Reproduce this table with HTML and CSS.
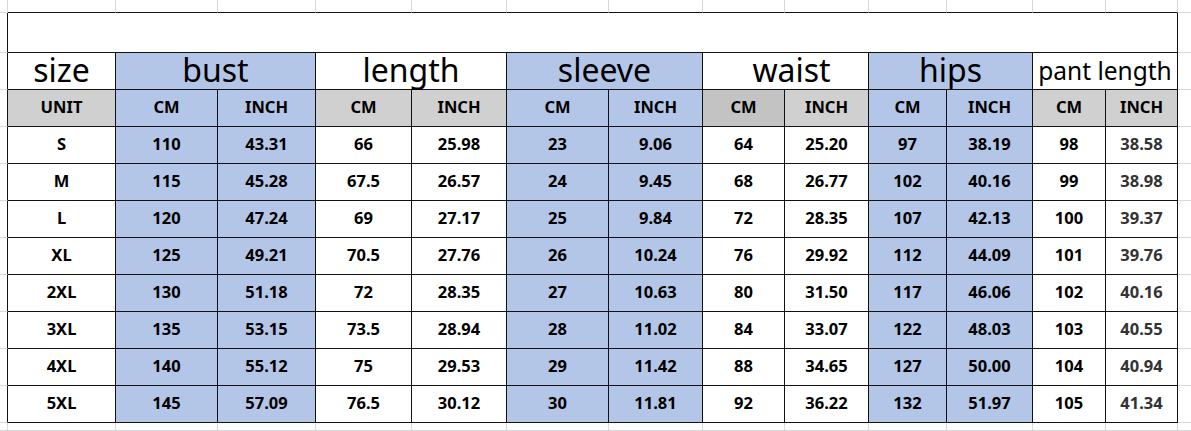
FILE: index.html
```html
<!DOCTYPE html>
<html>
<head>
<meta charset="utf-8">
<link rel="stylesheet" href="styles.css">
</head>
<body>
<div class="sheet">
  <!-- row 0 -->
  <div class="c"></div>
  <div class="c et"></div><div class="c et"></div><div class="c et"></div><div class="c et"></div><div class="c et"></div><div class="c et"></div><div class="c et"></div><div class="c et"></div><div class="c et"></div><div class="c et"></div><div class="c et"></div><div class="c et"></div><div class="c et"></div>
  <div class="c last"></div>
  <!-- row 1 -->
  <div class="c el"></div>
  <div class="c t title"></div>
  <div class="c last"></div>
  <!-- row 2 -->
  <div class="c el"></div>
  <div class="c t hd">size</div>
  <div class="c t hd blue span2">bust</div>
  <div class="c t hd span2">length</div>
  <div class="c t hd blue span2">sleeve</div>
  <div class="c t hd span2 shift">waist</div>
  <div class="c t hd blue span2">hips</div>
  <div class="c t hd small span2">pant length</div>
  <div class="c last"></div>
  <!-- row 3 -->
  <div class="c el"></div>
  <div class="c t d grey">UNIT</div>
  <div class="c t d blue">CM</div><div class="c t d blue">INCH</div>
  <div class="c t d grey">CM</div><div class="c t d grey">INCH</div>
  <div class="c t d blue">CM</div><div class="c t d blue">INCH</div>
  <div class="c t d grey2">CM</div><div class="c t d grey">INCH</div>
  <div class="c t d blue">CM</div><div class="c t d blue">INCH</div>
  <div class="c t d grey">CM</div><div class="c t d grey">INCH</div>
  <div class="c last"></div>
  <!-- S -->
  <div class="c el"></div>
  <div class="c t d">S</div>
  <div class="c t d blue">110</div><div class="c t d blue">43.31</div>
  <div class="c t d">66</div><div class="c t d">25.98</div>
  <div class="c t d blue">23</div><div class="c t d blue">9.06</div>
  <div class="c t d">64</div><div class="c t d">25.20</div>
  <div class="c t d blue">97</div><div class="c t d blue">38.19</div>
  <div class="c t d">98</div><div class="c t d soft">38.58</div>
  <div class="c last"></div>
  <!-- M -->
  <div class="c el"></div>
  <div class="c t d">M</div>
  <div class="c t d blue">115</div><div class="c t d blue">45.28</div>
  <div class="c t d">67.5</div><div class="c t d">26.57</div>
  <div class="c t d blue">24</div><div class="c t d blue">9.45</div>
  <div class="c t d">68</div><div class="c t d">26.77</div>
  <div class="c t d blue">102</div><div class="c t d blue">40.16</div>
  <div class="c t d">99</div><div class="c t d soft">38.98</div>
  <div class="c last"></div>
  <!-- L -->
  <div class="c el"></div>
  <div class="c t d">L</div>
  <div class="c t d blue">120</div><div class="c t d blue">47.24</div>
  <div class="c t d">69</div><div class="c t d">27.17</div>
  <div class="c t d blue">25</div><div class="c t d blue">9.84</div>
  <div class="c t d">72</div><div class="c t d">28.35</div>
  <div class="c t d blue">107</div><div class="c t d blue">42.13</div>
  <div class="c t d">100</div><div class="c t d soft">39.37</div>
  <div class="c last"></div>
  <!-- XL -->
  <div class="c el"></div>
  <div class="c t d">XL</div>
  <div class="c t d blue">125</div><div class="c t d blue">49.21</div>
  <div class="c t d">70.5</div><div class="c t d">27.76</div>
  <div class="c t d blue">26</div><div class="c t d blue">10.24</div>
  <div class="c t d">76</div><div class="c t d">29.92</div>
  <div class="c t d blue">112</div><div class="c t d blue">44.09</div>
  <div class="c t d">101</div><div class="c t d soft">39.76</div>
  <div class="c last"></div>
  <!-- 2XL -->
  <div class="c el"></div>
  <div class="c t d">2XL</div>
  <div class="c t d blue">130</div><div class="c t d blue">51.18</div>
  <div class="c t d">72</div><div class="c t d">28.35</div>
  <div class="c t d blue">27</div><div class="c t d blue">10.63</div>
  <div class="c t d">80</div><div class="c t d">31.50</div>
  <div class="c t d blue">117</div><div class="c t d blue">46.06</div>
  <div class="c t d">102</div><div class="c t d soft">40.16</div>
  <div class="c last"></div>
  <!-- 3XL -->
  <div class="c el"></div>
  <div class="c t d">3XL</div>
  <div class="c t d blue">135</div><div class="c t d blue">53.15</div>
  <div class="c t d">73.5</div><div class="c t d">28.94</div>
  <div class="c t d blue">28</div><div class="c t d blue">11.02</div>
  <div class="c t d">84</div><div class="c t d">33.07</div>
  <div class="c t d blue">122</div><div class="c t d blue">48.03</div>
  <div class="c t d">103</div><div class="c t d soft">40.55</div>
  <div class="c last"></div>
  <!-- 4XL -->
  <div class="c el"></div>
  <div class="c t d">4XL</div>
  <div class="c t d blue">140</div><div class="c t d blue">55.12</div>
  <div class="c t d">75</div><div class="c t d">29.53</div>
  <div class="c t d blue">29</div><div class="c t d blue">11.42</div>
  <div class="c t d">88</div><div class="c t d">34.65</div>
  <div class="c t d blue">127</div><div class="c t d blue">50.00</div>
  <div class="c t d">104</div><div class="c t d soft">40.94</div>
  <div class="c last"></div>
  <!-- 5XL -->
  <div class="c el"></div>
  <div class="c t d">5XL</div>
  <div class="c t d blue">145</div><div class="c t d blue">57.09</div>
  <div class="c t d">76.5</div><div class="c t d">30.12</div>
  <div class="c t d blue">30</div><div class="c t d blue">11.81</div>
  <div class="c t d">92</div><div class="c t d">36.22</div>
  <div class="c t d blue">132</div><div class="c t d blue">51.97</div>
  <div class="c t d">105</div><div class="c t d soft">41.34</div>
  <div class="c last"></div>
  <!-- row 12 -->
  <div class="c"></div>
  <div class="c"></div><div class="c"></div><div class="c"></div><div class="c"></div><div class="c"></div><div class="c"></div><div class="c"></div><div class="c"></div><div class="c"></div><div class="c"></div><div class="c"></div><div class="c"></div><div class="c"></div>
  <div class="c last"></div>
</div>
</body>
</html>
```
FILE: styles.css
```css
html, body {
  margin: 0;
  padding: 0;
  background: #ffffff;
}

body {
  font-family: "Noto Sans", "Open Sans", sans-serif;
  color: #000;
  width: 1191px;
  height: 431px;
  overflow: hidden;
}

.sheet {
  display: grid;
  grid-template-columns: 8px 108px 102px 98px 96px 95px 102px 94px 82px 84px 78px 86px 73px 72px 13px;
  grid-template-rows: 13px 40px 37px 37px 37px 37px 37px 37px 37px 37px 37px 37px 8px;
  width: 1191px;
}

.c {
  box-sizing: border-box;
  border-right: 1px solid #d8d8d8;
  border-bottom: 1px solid #d8d8d8;
  display: flex;
  align-items: center;
  justify-content: center;
  background: #ffffff;
  min-width: 0;
}

.last {
  border-right: none;
}

.et {
  border-bottom-color: #111;
}

.el {
  border-right-color: #111;
}

.t {
  border-right-color: #111;
  border-bottom-color: #111;
}

.title {
  grid-column: span 13;
}

.span2 {
  grid-column: span 2;
}

.hd {
  font-size: 32px;
  font-weight: 400;
  line-height: 1;
  padding-bottom: 3px;
  white-space: nowrap;
}

.hd.shift {
  padding-left: 12px;
}

.hd.small {
  font-size: 24.5px;
  padding-bottom: 0;
}

.d {
  font-size: 16.5px;
  font-weight: 700;
  line-height: 1;
  padding-bottom: 1px;
}

.blue {
  background: #b4c6e7;
}

.grey {
  background: #d0d0d0;
}

.grey2 {
  background: #c3c3c3;
}

.soft {
  color: #333;
}
```
